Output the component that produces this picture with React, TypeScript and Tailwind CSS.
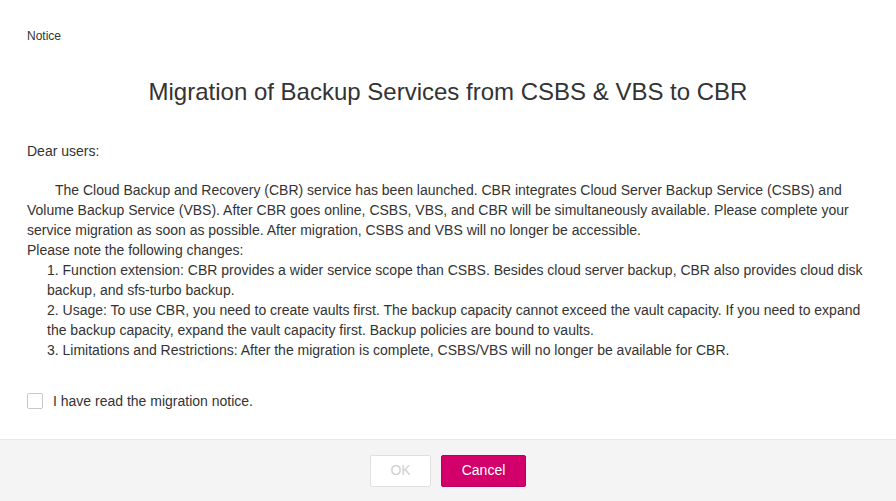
export default function App() {
  return (
    <div className="flex h-[501px] w-[896px] flex-col bg-white text-[#333] font-['Liberation_Sans',Arial,sans-serif]">
      <div className="flex-1 px-[27px]">
        <div className="pt-[29px] text-[12px] leading-[14px]">Notice</div>
        <h1 className="mt-[34px] text-center text-[24px] leading-[30px] text-[#333]">
          Migration of Backup Services from CSBS &amp; VBS to CBR
        </h1>
        <div className="mt-[34px] text-[14px] leading-[20px]">
          <p>Dear users:</p>
          <p className="mt-[19px] indent-[28px]">
            The Cloud Backup and Recovery (CBR) service has been launched. CBR integrates Cloud Server Backup Service
            (CSBS) and Volume Backup Service (VBS). After CBR goes online, CSBS, VBS, and CBR will be simultaneously
            available. Please complete your service migration as soon as possible. After migration, CSBS and VBS will
            no longer be accessible.
          </p>
          <p>Please note the following changes:</p>
          <div className="pl-[20px]">
            <p>
              1. Function extension: CBR provides a wider service scope than CSBS. Besides cloud server backup, CBR
              also provides cloud disk backup, and sfs-turbo backup.
            </p>
            <p>
              2. Usage: To use CBR, you need to create vaults first. The backup capacity cannot exceed the vault
              capacity. If you need to expand the backup capacity, expand the vault capacity first. Backup policies
              are bound to vaults.
            </p>
            <p>3. Limitations and Restrictions: After the migration is complete, CSBS/VBS will no longer be available for CBR.</p>
          </div>
        </div>
        <label className="mt-[31px] flex items-center gap-[10px] text-[14px] leading-[20px]">
          <span className="h-[16px] w-[16px] rounded-[2px] border border-[#c8c8c8] bg-white" />
          <span>I have read the migration notice.</span>
        </label>
      </div>
      <div className="flex h-[62px] items-center justify-center gap-[10px] border-t border-[#e8e8e8] bg-[#f4f4f4]">
        <button className="h-[32px] w-[61px] rounded-[2px] border border-[#e0e0e0] bg-white text-[14px] text-[#d0d0d0]">
          OK
        </button>
        <button className="h-[32px] w-[85px] rounded-[2px] border border-[#b8005c] bg-[#d3006b] text-[14px] text-white">
          Cancel
        </button>
      </div>
    </div>
  );
}
